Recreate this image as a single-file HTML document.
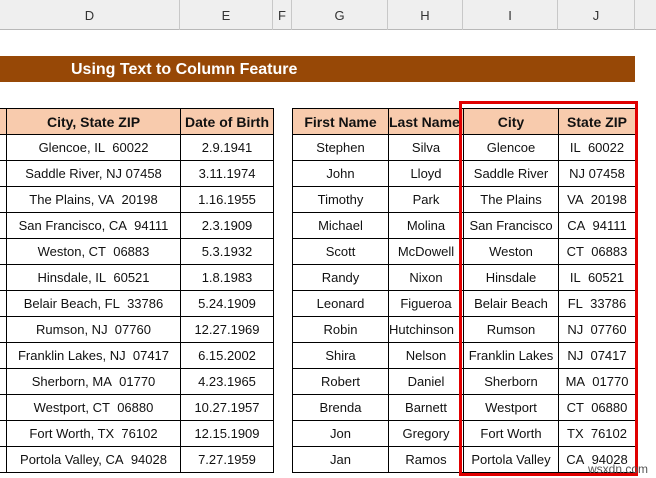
<!DOCTYPE html>
<html><head><meta charset="utf-8"><style>
body{margin:0;width:656px;height:478px;overflow:hidden;background:#fff;font-family:"Liberation Sans",sans-serif;position:relative}
.hdr{position:absolute;top:0;left:0;width:656px;height:30px;background:#efefef;border-bottom:1px solid #b8b8b8;box-sizing:border-box}
.hdr div{position:absolute;top:0;height:30px;line-height:32px;text-align:center;font-size:13px;color:#333;border-right:1px solid #c8c8c8;box-sizing:border-box}
.title{position:absolute;left:0;top:56px;width:635px;height:26px;background:#974806;color:#fff;font-weight:bold;font-size:16px;line-height:27px}
.title span{position:absolute;left:71px}
table{position:absolute;top:108px;border-collapse:collapse;table-layout:fixed;font-size:13px;color:#111}
td{border:1px solid #000;height:25px;padding:0;text-align:center;white-space:nowrap;overflow:hidden}
tr.h td{background:#f8cbad;font-weight:bold;font-size:14px}
.red{position:absolute;left:459px;top:101px;width:173px;height:369px;border:3px solid #e00000}
.wm{position:absolute;left:588px;top:462px;font-size:12px;color:#555}
</style></head><body>
<div class="hdr">
<div style="left:0;width:180px">D</div>
<div style="left:180px;width:93px">E</div>
<div style="left:273px;width:19px">F</div>
<div style="left:292px;width:96px">G</div>
<div style="left:388px;width:75px">H</div>
<div style="left:463px;width:95px">I</div>
<div style="left:558px;width:77px">J</div>
</div>
<div class="title"><span>Using Text to Column Feature</span></div>
<table style="left:-1px"><colgroup><col style="width:7px"><col style="width:174px"><col style="width:93px"></colgroup>
<tr class="h"><td></td><td>City, State ZIP</td><td>Date of Birth</td></tr>
<tr><td></td><td>Glencoe, IL&nbsp; 60022</td><td>2.9.1941</td></tr>
<tr><td></td><td>Saddle River, NJ 07458</td><td>3.11.1974</td></tr>
<tr><td></td><td>The Plains, VA&nbsp; 20198</td><td>1.16.1955</td></tr>
<tr><td></td><td>San Francisco, CA&nbsp; 94111</td><td>2.3.1909</td></tr>
<tr><td></td><td>Weston, CT&nbsp; 06883</td><td>5.3.1932</td></tr>
<tr><td></td><td>Hinsdale, IL&nbsp; 60521</td><td>1.8.1983</td></tr>
<tr><td></td><td>Belair Beach, FL&nbsp; 33786</td><td>5.24.1909</td></tr>
<tr><td></td><td>Rumson, NJ&nbsp; 07760</td><td>12.27.1969</td></tr>
<tr><td></td><td>Franklin Lakes, NJ&nbsp; 07417</td><td>6.15.2002</td></tr>
<tr><td></td><td>Sherborn, MA&nbsp; 01770</td><td>4.23.1965</td></tr>
<tr><td></td><td>Westport, CT&nbsp; 06880</td><td>10.27.1957</td></tr>
<tr><td></td><td>Fort Worth, TX&nbsp; 76102</td><td>12.15.1909</td></tr>
<tr><td></td><td>Portola Valley, CA&nbsp; 94028</td><td>7.27.1959</td></tr>
</table>
<table style="left:292px"><colgroup><col style="width:96px"><col style="width:75px"><col style="width:95px"><col style="width:77px"></colgroup>
<tr class="h"><td>First Name</td><td style="text-align:left">Last Name</td><td>City</td><td>State ZIP</td></tr>
<tr><td>Stephen</td><td>Silva</td><td>Glencoe</td><td>IL&nbsp; 60022</td></tr>
<tr><td>John</td><td>Lloyd</td><td>Saddle River</td><td>NJ 07458</td></tr>
<tr><td>Timothy</td><td>Park</td><td>The Plains</td><td>VA&nbsp; 20198</td></tr>
<tr><td>Michael</td><td>Molina</td><td>San Francisco</td><td>CA&nbsp; 94111</td></tr>
<tr><td>Scott</td><td>McDowell</td><td>Weston</td><td>CT&nbsp; 06883</td></tr>
<tr><td>Randy</td><td>Nixon</td><td>Hinsdale</td><td>IL&nbsp; 60521</td></tr>
<tr><td>Leonard</td><td>Figueroa</td><td>Belair Beach</td><td>FL&nbsp; 33786</td></tr>
<tr><td>Robin</td><td style="text-align:left">Hutchinson</td><td>Rumson</td><td>NJ&nbsp; 07760</td></tr>
<tr><td>Shira</td><td>Nelson</td><td>Franklin Lakes</td><td>NJ&nbsp; 07417</td></tr>
<tr><td>Robert</td><td>Daniel</td><td>Sherborn</td><td>MA&nbsp; 01770</td></tr>
<tr><td>Brenda</td><td>Barnett</td><td>Westport</td><td>CT&nbsp; 06880</td></tr>
<tr><td>Jon</td><td>Gregory</td><td>Fort Worth</td><td>TX&nbsp; 76102</td></tr>
<tr><td>Jan</td><td>Ramos</td><td>Portola Valley</td><td>CA&nbsp; 94028</td></tr>
</table>
<div class="red"></div>
<div class="wm">wsxdn.com</div>
</body></html>
